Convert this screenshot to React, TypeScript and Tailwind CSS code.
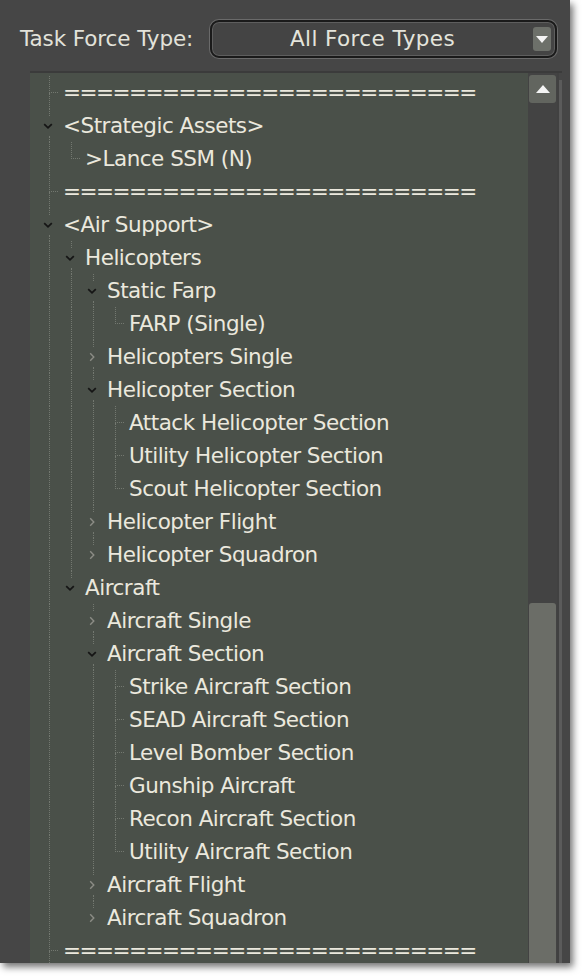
import React from 'react';

type TreeNode = {
  label: string;
  children?: TreeNode[];
  collapsed?: boolean;
};

const SEP = '='.repeat(25);

const tree: TreeNode[] = [
  { label: SEP },
  { label: '<Strategic Assets>', children: [{ label: '>Lance SSM (N)' }] },
  { label: SEP },
  {
    label: '<Air Support>',
    children: [
      {
        label: 'Helicopters',
        children: [
          { label: 'Static Farp', children: [{ label: 'FARP (Single)' }] },
          { label: 'Helicopters Single', collapsed: true },
          {
            label: 'Helicopter Section',
            children: [
              { label: 'Attack Helicopter Section' },
              { label: 'Utility Helicopter Section' },
              { label: 'Scout Helicopter Section' },
            ],
          },
          { label: 'Helicopter Flight', collapsed: true },
          { label: 'Helicopter Squadron', collapsed: true },
        ],
      },
      {
        label: 'Aircraft',
        children: [
          { label: 'Aircraft Single', collapsed: true },
          {
            label: 'Aircraft Section',
            children: [
              { label: 'Strike Aircraft Section' },
              { label: 'SEAD Aircraft Section' },
              { label: 'Level Bomber Section' },
              { label: 'Gunship Aircraft' },
              { label: 'Recon Aircraft Section' },
              { label: 'Utility Aircraft Section' },
            ],
          },
          { label: 'Aircraft Flight', collapsed: true },
          { label: 'Aircraft Squadron', collapsed: true },
        ],
      },
    ],
  },
  { label: SEP },
];

const lineCls = 'border-l border-dotted border-[#737870]';

const Chevron: React.FC<{ open: boolean }> = ({ open }) =>
  open ? (
    <svg width="10" height="10" viewBox="0 0 10 10">
      <polyline points="1.2,3.2 5,6.8 8.8,3.2" fill="none" stroke="#151515" strokeWidth="1.8" />
    </svg>
  ) : (
    <svg width="10" height="10" viewBox="0 0 10 10">
      <polyline points="3.2,1.2 6.8,5 3.2,8.8" fill="none" stroke="#8c8d86" strokeWidth="1.4" />
    </svg>
  );

// one row per visible node; guides = whether each ancestor column keeps its line going
function renderRows(nodes: TreeNode[], guides: boolean[], more: boolean): React.ReactNode[] {
  const rows: React.ReactNode[] = [];
  nodes.forEach((node, i) => {
    const last = !more && i === nodes.length - 1;
    const hasKids = !!node.children || node.collapsed;
    const isSep = node.label === SEP;
    rows.push(
      <div key={`${guides.length}-${i}-${node.label}`} className="flex h-[33px] pl-[8px]">
        {guides.map((g, gi) => (
          <div key={gi} className="w-[22px] shrink-0">
            {g && <div className={`ml-[11px] h-full ${lineCls}`} />}
          </div>
        ))}
        {hasKids ? (
          <div className="flex w-[22px] shrink-0 flex-col">
            <div className={`ml-[11px] flex-1 ${lineCls}`} />
            <div className="flex h-[20px] items-center justify-center pr-[3px]">
              <Chevron open={!node.collapsed} />
            </div>
            <div className={`ml-[11px] flex-1 ${last ? '' : lineCls}`} />
          </div>
        ) : (
          <div className="flex w-[22px] shrink-0 flex-col">
            <div className={`ml-[11px] h-1/2 w-[9px] border-b border-dotted border-[#737870] ${lineCls}`} />
            <div className={`ml-[11px] flex-1 ${last ? '' : lineCls}`} />
          </div>
        )}
        <span
          className={`ml-[3px] whitespace-nowrap leading-[33px] ${
            isSep ? 'tracking-[-1.5px]' : 'tracking-[-0.5px]'
          }`}
        >
          {node.label}
        </span>
      </div>
    );
    if (node.children && !node.collapsed) {
      rows.push(...renderRows(node.children, [...guides, !last], false));
    }
  });
  return rows;
}

export default function App() {
  return (
    <div className="min-h-screen bg-white font-['DejaVu_Sans',sans-serif] text-[21.5px] text-[#ebe8dd]">
      <div className="flex h-[963px] w-[570px] flex-col overflow-hidden bg-[#464646] shadow-[3px_4px_7px_rgba(0,0,0,0.55)]">
        {/* header */}
        <div className="flex items-center pl-[20px] pr-[13px] pt-[20px]">
          <span className="tracking-[-0.1px] text-[#e2e2da]">Task Force Type:</span>
          <div className="ml-auto flex h-[38px] w-[347px] items-center rounded-[9px] border-2 border-[#1a1a1a] bg-[#444444] shadow-[0_0_0_1px_#6a6a6a,inset_0_0_0_1px_#5e5e5e]">
            <span className="flex-1 text-center tracking-[0.4px] text-[#e4e4dc]">All Force Types</span>
            <div className="mr-[4px] flex h-[24px] w-[18px] items-center justify-center rounded-[3px] bg-[#6d706a]">
              <svg width="12" height="7" viewBox="0 0 12 7">
                <polygon points="0,0 12,0 6,7" fill="#f4f4f4" />
              </svg>
            </div>
          </div>
        </div>

        {/* tree frame */}
        <div className="ml-[30px] mr-[8px] mt-[13px] flex flex-1 overflow-hidden border-t-2 border-[#3b3b3b]">
          <div className="flex-1 overflow-hidden bg-[#4a5049] pt-[3px]">
            {renderRows(tree, [], true)}
          </div>
          <div className="flex w-[29px] flex-col bg-[#434343]">
            <div className="mx-[1px] mt-[2px] flex h-[28px] items-center justify-center rounded-[3px] bg-[#62655f]">
              <svg width="14" height="8" viewBox="0 0 14 8">
                <polygon points="0,8 14,8 7,0" fill="#f4f4f4" />
              </svg>
            </div>
            <div className="h-[500px]" />
            <div className="mx-[1px] flex-1 rounded-t-[3px] bg-[#6b6d67]" />
          </div>
          <div className="w-[2px] bg-[#414141]" />
          <div className="mt-[7px] w-[3px] bg-[#5b5b5b]" />
        </div>
      </div>
    </div>
  );
}
